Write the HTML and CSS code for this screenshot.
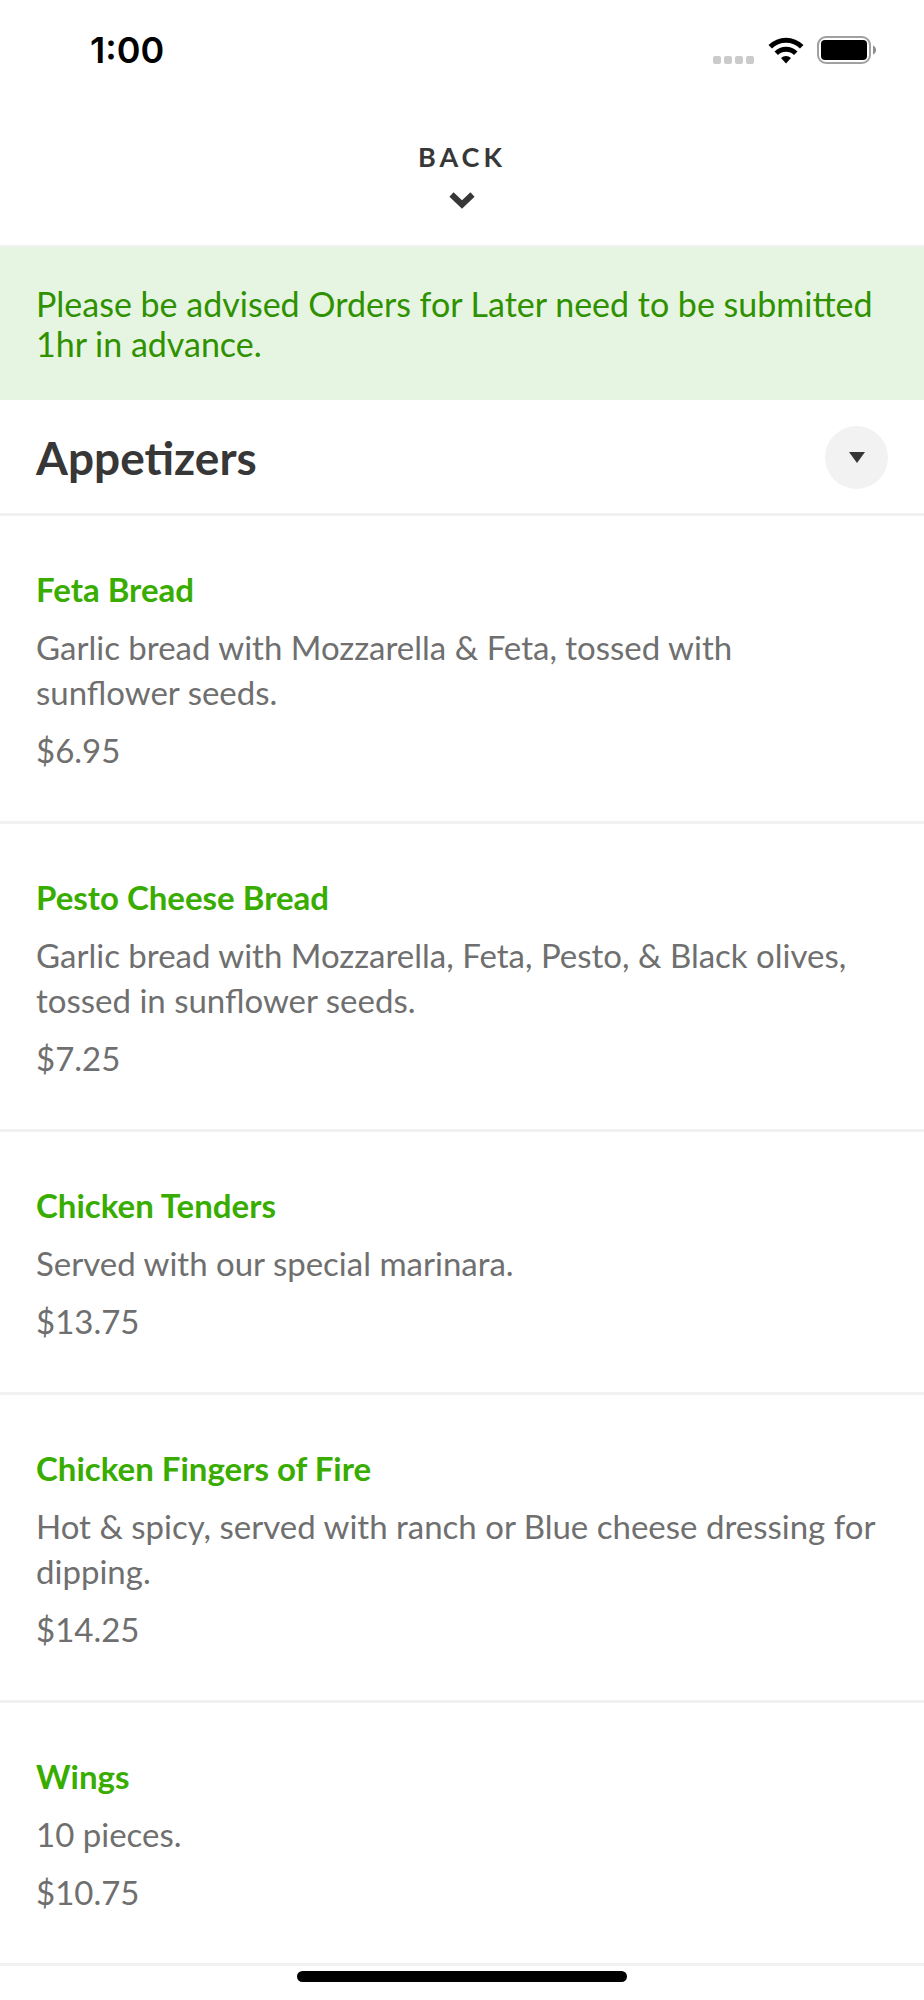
FILE: index.html
```html
<!doctype html>
<html lang="en">
  <head>
    <meta charset="utf-8">
    <meta name="viewport" content="width=device-width, initial-scale=1">
    <title>Appetizers</title>
    <link rel="stylesheet" href="styles.css">
  </head>
  <body>
    <div class="status-bar">
      <span class="clock">1:00</span>
      <div class="status-icons">
        <svg class="signal" width="42" height="8" viewBox="0 0 42 8" fill="#cbcbcb" aria-hidden="true">
          <rect x="0" width="8" height="8" rx="2"/>
          <rect x="11" width="8" height="8" rx="2"/>
          <rect x="22" width="8" height="8" rx="2"/>
          <rect x="33" width="8" height="8" rx="2"/>
        </svg>
        <svg class="wifi" width="36" height="27" viewBox="0 0 36 27" aria-hidden="true">
          <path d="M0.5 8 A25 25 0 0 1 35.5 8 L32 11.5 A20 20 0 0 0 4 11.5Z"/>
          <path d="M6.5 14.5 A16.5 16.5 0 0 1 29.5 14.5 L26 18 A11.5 11.5 0 0 0 10 18Z"/>
          <path d="M13 21 A7.5 7.5 0 0 1 23 21 L18 26.5Z"/>
        </svg>
        <svg class="battery" width="60" height="28" viewBox="0 0 60 28" aria-hidden="true">
          <rect x="1" y="1" width="52" height="26" rx="8" fill="none" stroke="#a0a0a0" stroke-width="2"/>
          <rect x="4" y="4" width="46" height="20" rx="4"/>
          <path d="M56 9.500 Q59 11 59 14 T56 18.500Z" fill="#8e8e8e"/>
        </svg>
      </div>
    </div>

    <header class="top">
      <button class="back" type="button">
        <span class="back-label">BACK</span>
        <svg width="26" height="17" viewBox="0 0 26 17" aria-hidden="true">
          <path d="M2.500 2.500 L13 12.500 L23.500 2.500" fill="none" stroke="#373737" stroke-width="6"/>
        </svg>
      </button>
    </header>

    <main>
      <p class="notice">Please be advised Orders for Later need to be submitted 1hr in advance.</p>

      <div class="category">
        <h1>Appetizers</h1>
        <button class="toggle" type="button" aria-label="Choose category">
          <svg width="16" height="11" viewBox="0 0 16 11" aria-hidden="true">
            <path d="M0 0 H16 L8 11Z" fill="#373737"/>
          </svg>
        </button>
      </div>

      <ul class="menu">
        <li class="item">
          <h2>Feta Bread</h2>
          <p>Garlic bread with Mozzarella &amp; Feta, tossed with sunflower&nbsp;seeds.</p>
          <p>$6.95</p>
        </li>
        <li class="item">
          <h2>Pesto Cheese Bread</h2>
          <p>Garlic bread with Mozzarella, Feta, Pesto, &amp; Black olives, tossed in sunflower&nbsp;seeds.</p>
          <p>$7.25</p>
        </li>
        <li class="item">
          <h2>Chicken Tenders</h2>
          <p>Served with our special marinara.</p>
          <p>$13.75</p>
        </li>
        <li class="item">
          <h2>Chicken Fingers of Fire</h2>
          <p>Hot &amp; spicy, served with ranch or Blue cheese dressing for dipping.</p>
          <p>$14.25</p>
        </li>
        <li class="item">
          <h2>Wings</h2>
          <p>10 pieces.</p>
          <p>$10.75</p>
        </li>
      </ul>
    </main>

    <div class="home-indicator"></div>
  </body>
</html>
```
FILE: styles.css
```css
* {
  box-sizing: border-box;
}
body {
  margin: 0;
  background-color: #fff;
  color: #6f6f6f;
  font-family: Lato, sans-serif;
  font-size: 33px;
  line-height: 45px;
}
h1,
h2,
p,
ul {
  margin: 0;
  padding: 0;
}
button {
  border: 0;
  padding: 0;
  background: none;
  color: inherit;
  font: inherit;
  cursor: pointer;
}

.status-bar {
  display: flex;
  align-items: center;
  justify-content: space-between;
  height: 100px;
  padding: 0 47px 0 90px;
  color: #000;
}
.clock {
  font-family: Inter, sans-serif;
  font-size: 36px;
  font-weight: 600;
}
.status-icons {
  display: flex;
  align-items: center;
  gap: 13px;
}
.signal {
  align-self: flex-end;
}

.top {
  display: flex;
  justify-content: center;
  padding: 41px 36px 36px;
  border-bottom: 2px solid #f1f1f1;
}
.back {
  display: flex;
  flex-direction: column;
  align-items: center;
  gap: 19px;
}
.back-label {
  color: #373737;
  font-size: 27px;
  font-weight: 700;
  line-height: 32px;
  letter-spacing: 4px;
}

.notice {
  padding: 37px 36px 36px;
  background-color: #e6f5e1;
  color: #2f9100;
  font-size: 34px;
  line-height: 40px;
}

.category {
  display: flex;
  align-items: center;
  justify-content: space-between;
  padding: 26px 36px 24px;
  border-bottom: 3px solid #f1f1f1;
}
.category h1 {
  color: #373737;
  font-size: 46px;
  font-weight: 700;
  line-height: 54px;
}
.toggle {
  display: flex;
  align-items: center;
  justify-content: center;
  width: 63px;
  height: 63px;
  border-radius: 50%;
  background-color: #f2f2f2;
}

.menu {
  list-style: none;
}
.item {
  display: flex;
  flex-direction: column;
  gap: 13px;
  padding: 51px 36px 48px;
  border-bottom: 3px solid #f1f1f1;
}
.item h2 {
  color: #38ad00;
  font-size: 33px;
  font-weight: 700;
}

.home-indicator {
  position: fixed;
  bottom: 18px;
  left: 50%;
  width: 330px;
  height: 11px;
  margin-left: -165px;
  border-radius: 6px;
  background-color: #000;
}
```
